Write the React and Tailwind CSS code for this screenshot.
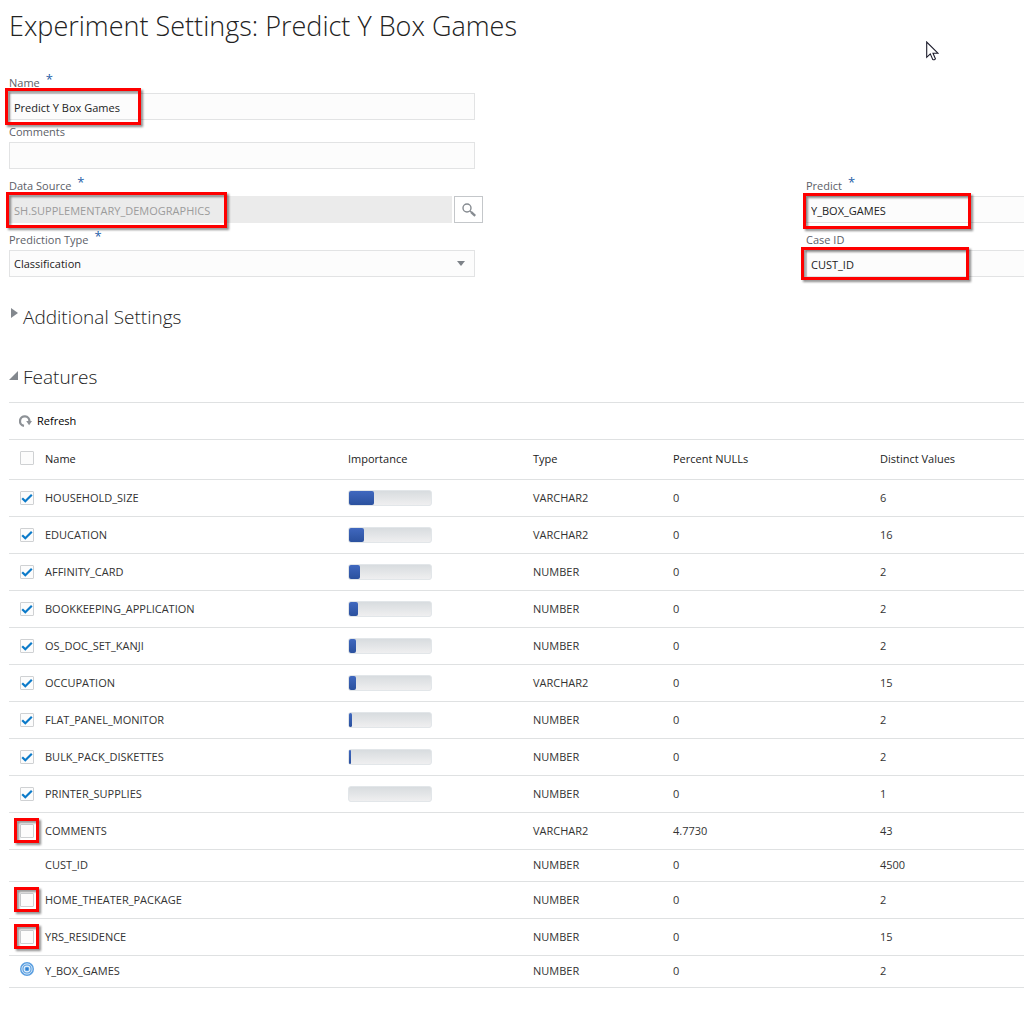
import React from "react";

const features = [
  { name: "HOUSEHOLD_SIZE", importance: 30, type: "VARCHAR2", nulls: "0", distinct: "6", checked: true },
  { name: "EDUCATION", importance: 18, type: "VARCHAR2", nulls: "0", distinct: "16", checked: true },
  { name: "AFFINITY_CARD", importance: 13, type: "NUMBER", nulls: "0", distinct: "2", checked: true },
  { name: "BOOKKEEPING_APPLICATION", importance: 11, type: "NUMBER", nulls: "0", distinct: "2", checked: true },
  { name: "OS_DOC_SET_KANJI", importance: 9, type: "NUMBER", nulls: "0", distinct: "2", checked: true },
  { name: "OCCUPATION", importance: 8, type: "VARCHAR2", nulls: "0", distinct: "15", checked: true },
  { name: "FLAT_PANEL_MONITOR", importance: 4, type: "NUMBER", nulls: "0", distinct: "2", checked: true },
  { name: "BULK_PACK_DISKETTES", importance: 2, type: "NUMBER", nulls: "0", distinct: "2", checked: true },
  { name: "PRINTER_SUPPLIES", importance: 0, type: "NUMBER", nulls: "0", distinct: "1", checked: true },
  { name: "COMMENTS", type: "VARCHAR2", nulls: "4.7730", distinct: "43", checked: false, marked: true },
  { name: "CUST_ID", type: "NUMBER", nulls: "0", distinct: "4500", role: "case" },
  { name: "HOME_THEATER_PACKAGE", type: "NUMBER", nulls: "0", distinct: "2", checked: false, marked: true },
  { name: "YRS_RESIDENCE", type: "NUMBER", nulls: "0", distinct: "15", checked: false, marked: true },
  { name: "Y_BOX_GAMES", type: "NUMBER", nulls: "0", distinct: "2", role: "target" },
];

function Highlight({ className }) {
  return (
    <span
      aria-hidden="true"
      className={
        "pointer-events-none absolute z-10 border-3 border-[#fe0000] drop-shadow-[2px_2px_1px_rgba(0,0,0,0.45)] " +
        className
      }
    />
  );
}

function Field({ id, label, required, children }) {
  return (
    <div className={required ? "pt-[7px]" : "pt-0.5"}>
      <label htmlFor={id} className="flex h-5 items-center text-[#5c6067]">
        {label}
        {required && <span className="mb-2 ml-1.5 text-[13px] leading-none text-[#1f5fa8]">*</span>}
      </label>
      <div className="relative flex gap-0.5">{children}</div>
    </div>
  );
}

const inputClass =
  "block h-[27px] w-full min-w-0 appearance-none border border-[#e2e3e4] bg-[#fcfcfc] px-1 pt-0.5 text-[#222] outline-none";

function Checkbox({ label, checked, marked }) {
  return (
    <span className="relative block size-3.5">
      <input
        type="checkbox"
        aria-label={label}
        defaultChecked={checked}
        className="peer block size-3.5 appearance-none rounded-[1px] border border-[#cfd1d3] bg-[#fcfcfc]"
      />
      <svg
        viewBox="0 0 14 14"
        className="pointer-events-none absolute inset-0 hidden size-3.5 peer-checked:block"
        fill="none"
        stroke="#0b7ac9"
        strokeWidth="2.2"
      >
        <path d="M2.2 7.2 5.3 10.2 11.8 3.8" />
      </svg>
      {marked && <Highlight className="-left-1.5 -top-1.5 size-[25px]" />}
    </span>
  );
}

function TargetIcon() {
  return (
    <svg viewBox="0 0 14 14" className="mb-1.5 block size-3.5" fill="none" role="img" aria-label="Target">
      <circle cx="7" cy="7" r="7" fill="#5b9fe0" />
      <circle cx="7" cy="7" r="5.1" stroke="#d3e7f9" strokeWidth="1" />
      <circle cx="7" cy="7" r="2.9" stroke="#e4f1fc" strokeWidth="1.1" />
      <circle cx="7" cy="7" r="1.2" fill="#2f7fd0" />
    </svg>
  );
}

function Bar({ value }) {
  return (
    <div
      role="meter"
      aria-valuenow={value}
      aria-valuemin={0}
      aria-valuemax={100}
      aria-label="Importance"
      className="h-4 w-[84px] rounded-[3px] border border-[#e2e6e9] bg-linear-to-b from-[#d8dcdf] to-[#efeff0]"
    >
      <div
        className="h-full rounded-[2px] bg-linear-to-b from-[#4068bf] to-[#2b519e]"
        style={{ width: value + "%" }}
      />
    </div>
  );
}

export default function App() {
  return (
    <main className="relative min-h-screen overflow-hidden bg-white pb-8 pl-[9px] font-['Open_Sans','Noto_Sans',sans-serif] text-[11px] text-[#333]">
      <h1 className="pt-2 text-[27px] font-light leading-9 text-[#222]">
        Experiment Settings: Predict Y Box Games
      </h1>

      <svg viewBox="0 0 13 20" className="absolute left-[926px] top-[41px] h-5 w-[13px]" aria-hidden="true">
        <path
          d="M.7 1v15.3l3.6-3.4 2.5 5.7c1.1.5 2.2 0 2.6-.9L7 12.2h4.9z"
          fill="#fff"
          stroke="#1b1b2b"
          strokeWidth="1.1"
        />
      </svg>

      <form className="mt-[22px]">
        <div className="w-[466px] max-w-full">
          <Field id="name" label="Name" required>
            <input id="name" defaultValue="Predict Y Box Games" className={inputClass} />
            <Highlight className="-left-1 -top-[5px] h-[37px] w-34" />
          </Field>
          <Field id="comments" label="Comments">
            <input id="comments" className={inputClass} />
          </Field>
        </div>

        <div className="grid grid-cols-[797fr_218fr] items-end">
          <div className="w-[474px]">
            <Field id="source" label="Data Source" required>
              <input
                id="source"
                disabled
                defaultValue="SH.SUPPLEMENTARY_DEMOGRAPHICS"
                className="block h-[27px] min-w-0 flex-1 border border-[#ebebeb] bg-[#ebebeb] px-1 pt-0.5 text-[#9b9b9b]"
              />
              <button
                type="button"
                aria-label="Search data source"
                className="flex h-[27px] w-[29px] items-center justify-center border border-[#c4c7ca] bg-white"
              >
                <svg viewBox="0 0 14 14" className="size-3.5" fill="none" stroke="#868b91">
                  <circle cx="5" cy="5" r="4" strokeWidth="1.4" />
                  <path d="M8 8l1.6 1.4" strokeWidth="1.4" />
                  <path d="M9.2 9.2l4 3.6" strokeWidth="2.4" />
                </svg>
              </button>
              <Highlight className="-left-[3px] -top-1 h-9 w-[221px]" />
            </Field>
          </div>
          <Field id="predict" label="Predict" required>
            <input id="predict" defaultValue="Y_BOX_GAMES" className={inputClass + " border-r-0"} />
            <Highlight className="-left-[3px] -top-[3px] h-9 w-42" />
          </Field>
          <div className="w-[466px]">
            <Field id="ptype" label="Prediction Type" required>
              <select id="ptype" defaultValue="Classification" className={inputClass}>
                <option>Classification</option>
                <option>Regression</option>
              </select>
              <svg
                viewBox="0 0 8 5"
                className="pointer-events-none absolute right-2.5 top-[11px] h-[5px] w-2"
                aria-hidden="true"
              >
                <path d="M0 0h8L4 5z" fill="#7d8288" />
              </svg>
            </Field>
          </div>
          <Field id="caseid" label="Case ID">
            <input id="caseid" defaultValue="CUST_ID" className={inputClass + " border-r-0"} />
            <Highlight className="-left-[5px] -top-[3px] h-[33px] w-42" />
          </Field>
        </div>
      </form>

      <h2 className="mt-[25px]">
        <button type="button" aria-expanded="false" className="flex h-[30px] items-center text-[19px] font-light text-[#222]">
          <svg viewBox="0 0 7 10" className="mb-2 ml-0.5 mr-[5px] h-2.5 w-[7px]" aria-hidden="true">
            <path d="M0 0l7 5-7 5z" fill="#83888e" />
          </svg>
          Additional Settings
        </button>
      </h2>
      <h2 className="mt-[30px]">
        <button type="button" aria-expanded="true" className="flex h-[30px] items-center text-[19px] font-light text-[#222]">
          <svg viewBox="0 0 9 9" className="mb-1 mr-[5px] size-[9px]" aria-hidden="true">
            <path d="M9 0v9H0z" fill="#83888e" />
          </svg>
          Features
        </button>
      </h2>

      <section className="mt-2.5 border-t border-[#dfe1e2]">
        <div className="flex h-9 items-center pl-2.5 pt-px">
          <button type="button" className="flex items-center gap-[5px] text-black">
            <svg viewBox="0 0 13 13" className="size-[13px]" fill="none" aria-hidden="true">
              <path d="M5 10.8A4.7 4.7 0 1 1 10.4 6.4" stroke="#8d9196" strokeWidth="2.3" />
              <path d="M7.2 6H13L10.1 10.2z" fill="#8d9196" />
            </svg>
            Refresh
          </button>
        </div>
        <table className="w-full table-fixed border-collapse text-left">
          <colgroup>
            <col className="w-9" />
            <col className="w-[303px]" />
            <col className="w-[185px]" />
            <col className="w-[140px]" />
            <col className="w-[207px]" />
            <col />
          </colgroup>
          <thead>
            <tr className="h-10 border-y border-[#dfe1e2] text-[#222]">
              <th className="pb-1 pl-[11px]">
                <Checkbox label="Select all features" />
              </th>
              <th className="font-normal">Name</th>
              <th className="font-normal">Importance</th>
              <th className="font-normal">Type</th>
              <th className="font-normal">Percent NULLs</th>
              <th className="font-normal">Distinct Values</th>
            </tr>
          </thead>
          <tbody>
            {features.map((f) => (
              <tr key={f.name} className={(f.role ? "h-8" : "h-[37px]") + " border-b border-[#dfe1e2]"}>
                <td className="pl-[11px]">
                  {!f.role && <Checkbox label={f.name} checked={f.checked} marked={f.marked} />}
                  {f.role === "target" && <TargetIcon />}
                </td>
                <td>{f.name}</td>
                <td>{f.importance !== undefined && <Bar value={f.importance} />}</td>
                <td>{f.type}</td>
                <td>{f.nulls}</td>
                <td>{f.distinct}</td>
              </tr>
            ))}
          </tbody>
        </table>
      </section>
    </main>
  );
}
